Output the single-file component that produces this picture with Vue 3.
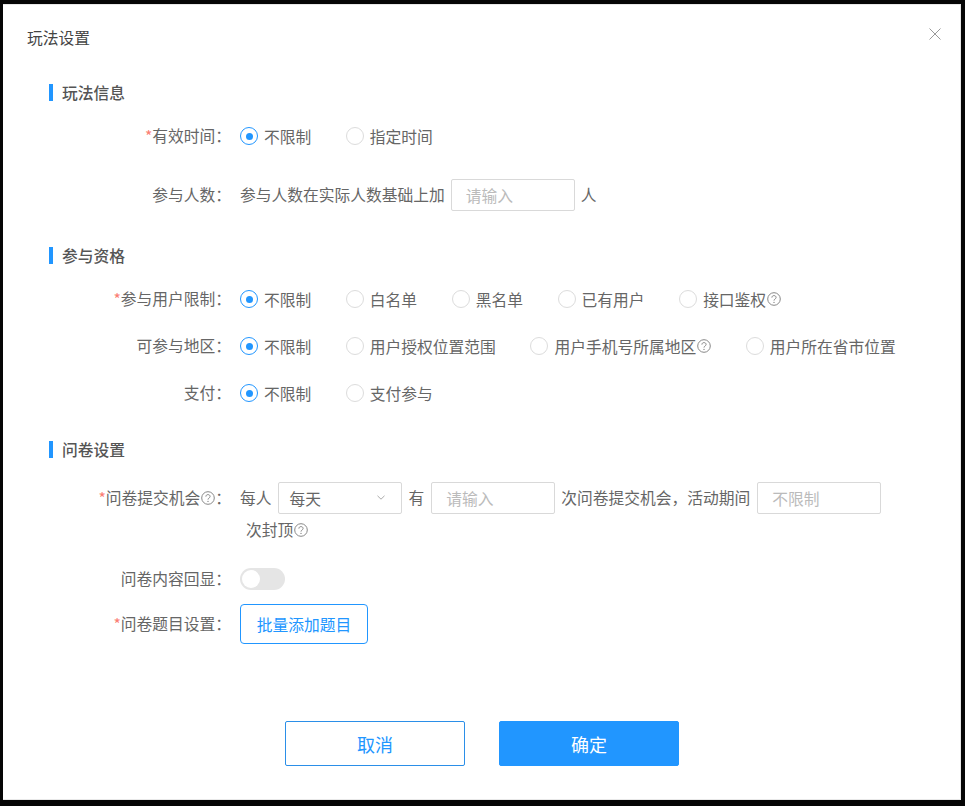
<script setup>
const userLimit = [
  { text: '不限制', on: true },
  { text: '白名单' },
  { text: '黑名单' },
  { text: '已有用户' },
  { text: '接口鉴权', help: true }
]
const region = [
  { text: '不限制', on: true },
  { text: '用户授权位置范围' },
  { text: '用户手机号所属地区', help: true },
  { text: '用户所在省市位置' }
]
const pay = [{ text: '不限制', on: true }, { text: '支付参与' }]
const time = [{ text: '不限制', on: true }, { text: '指定时间' }]
const groups = { time, userLimit, region, pay }
</script>

<template>
  <div class="page">
    <svg width="0" height="0" class="defs">
      <symbol id="help" viewBox="0 0 14 14">
        <circle cx="7" cy="7" r="6.3" fill="none" stroke="currentColor" stroke-width="1" />
        <path d="M4.9 5.6C4.9 4.3 5.8 3.6 7 3.6s2.1.8 2.1 1.8c0 1.6-2.1 1.6-2.1 3.2" fill="none" stroke="currentColor" stroke-width="1" />
        <circle cx="7" cy="10.4" r=".7" fill="currentColor" />
      </symbol>
    </svg>
    <div class="dialog">
      <div class="title">玩法设置</div>
      <svg class="close" width="12" height="12" viewBox="0 0 12 12">
        <path d="M.5.5l11 11M11.5.5l-11 11" stroke="#999" stroke-width="1" fill="none" />
      </svg>

      <section class="sec-first">
        <h3 class="heading">玩法信息</h3>
        <div class="row row-a">
          <label class="lab"><i>*</i>有效时间&#xFF1A;</label>
          <div class="radios">
            <span v-for="r in groups.time" :key="r.text" class="radio-item">
              <span class="radio" :class="{ on: r.on }"></span>{{ r.text }}
            </span>
          </div>
        </div>
        <div class="row">
          <label class="lab">参与人数&#xFF1A;</label>
          <div class="inline">
            <span>参与人数在实际人数基础上加</span>
            <input class="input" placeholder="请输入" />
            <span>人</span>
          </div>
        </div>
      </section>

      <section class="sec-second">
        <h3 class="heading">参与资格</h3>
        <div class="row row-b">
          <label class="lab"><i>*</i>参与用户限制&#xFF1A;</label>
          <div class="radios">
            <span v-for="r in groups.userLimit" :key="r.text" class="radio-item">
              <span class="radio" :class="{ on: r.on }"></span>{{ r.text }}
              <svg v-if="r.help" class="help shifted"><use href="#help" /></svg>
            </span>
          </div>
        </div>
        <div class="row row-b">
          <label class="lab">可参与地区&#xFF1A;</label>
          <div class="radios">
            <span v-for="r in groups.region" :key="r.text" class="radio-item">
              <span class="radio" :class="{ on: r.on }"></span>{{ r.text }}
              <svg v-if="r.help" class="help shifted"><use href="#help" /></svg>
            </span>
          </div>
        </div>
        <div class="row">
          <label class="lab">支付&#xFF1A;</label>
          <div class="radios">
            <span v-for="r in groups.pay" :key="r.text" class="radio-item">
              <span class="radio" :class="{ on: r.on }"></span>{{ r.text }}
            </span>
          </div>
        </div>
      </section>

      <section class="sec-third">
        <h3 class="heading">问卷设置</h3>
        <div class="row row-c">
          <label class="lab"><i>*</i>问卷提交机会<svg class="help"><use href="#help" /></svg>&#xFF1A;</label>
          <div class="inline wrap">
            <span>每人</span>
            <div class="select">每天
              <svg class="chev" width="8" height="5" viewBox="0 0 8 5">
                <path d="M.5.8L4 4.2 7.5.8" fill="none" stroke="#aaa" stroke-width="1" />
              </svg>
            </div>
            <span>有</span>
            <input class="input after-have" placeholder="请输入" />
            <span class="period">次问卷提交机会&#xFF0C;活动期间</span>
            <input class="input" placeholder="不限制" />
            <span class="cap">次封顶<svg class="help shifted"><use href="#help" /></svg></span>
          </div>
        </div>
        <div class="row row-d">
          <label class="lab">问卷内容回显&#xFF1A;</label>
          <div class="switch"><span class="knob"></span></div>
        </div>
        <div class="row row-e">
          <label class="lab"><i>*</i>问卷题目设置&#xFF1A;</label>
          <button class="outline">批量添加题目</button>
        </div>
      </section>

      <div class="footer">
        <button class="btn ghost">取消</button>
        <button class="btn primary">确定</button>
      </div>
    </div>
  </div>
</template>

<style scoped>
.page {
  height: 806px;
  background: #050505;
  padding: 4px 4px 6px 3px;
  box-sizing: border-box;
  font-family: "Noto Sans CJK SC", "Liberation Sans", sans-serif;
  font-size: 15.75px;
  color: #666;
}
.defs { position: absolute; }
.dialog {
  position: relative;
  height: 100%;
  background: #fff;
  border-top: 1px solid #e8e8e8;
  border-bottom: 1px solid #e8e8e8;
  border-right: 1px solid #e8e8e8;
  box-sizing: border-box;
  display: flex;
  flex-direction: column;
  padding-left: 46px;
}
.title {
  margin: 21px 0 0 -22px;
  height: 24px;
  line-height: 24px;
  color: #444;
}
.close { position: absolute; top: 23px; right: 19px; }
.heading {
  margin: 0 0 19px;
  height: 17px;
  line-height: 17px;
  font-size: 15.75px;
  font-weight: 500;
  color: #555;
  border-left: 4px solid #2196ff;
  padding-left: 9px;
}
.sec-first { margin-top: 34px; }
.sec-second { margin-top: 36px; }
.sec-third { margin-top: 32px; }
.sec-third .heading { margin-bottom: 24px; }
.row { display: flex; align-items: flex-start; }
.row-a { margin-bottom: 27px; }
.row-b { margin-bottom: 15px; }
.row-c { margin-bottom: 17px; }
.row-d { margin-bottom: 9px; }
.lab {
  flex: 0 0 182px;
  width: 182px;
  margin-right: 9px;
  text-align: right;
  line-height: 32px;
  white-space: nowrap;
  font-style: normal;
}
.lab i {
  font-style: normal;
  color: #fb7d72;
}
.lab .help { margin: 0 0 0 1px; }
.radios {
  display: flex;
  align-items: center;
  height: 32px;
}
.radio-item {
  display: flex;
  align-items: center;
  margin-right: 34.6px;
  white-space: nowrap;
}
.radio {
  width: 18px;
  height: 18px;
  box-sizing: border-box;
  border: 1px solid #dcdcdc;
  border-radius: 50%;
  margin-right: 6px;
  flex: none;
  display: flex;
  align-items: center;
  justify-content: center;
}
.radio.on { border-color: #2196ff; }
.radio.on::after {
  content: "";
  width: 7px;
  height: 7px;
  border-radius: 50%;
  background: #2196ff;
}
.help {
  width: 14px;
  height: 14px;
  color: #888;
  vertical-align: -1px;
}
.help.shifted { margin-left: 1px; }
.inline {
  display: flex;
  align-items: center;
  height: 32px;
  line-height: 32px;
  white-space: nowrap;
}
.inline.wrap {
  flex-wrap: wrap;
  height: auto;
  width: 660px;
}
.input {
  width: 124px;
  height: 32px;
  box-sizing: border-box;
  border: 1px solid #d9d9d9;
  border-radius: 2px;
  padding: 2px 14px 0;
  margin: 0 6px;
  font: inherit;
  color: #666;
  outline: none;
  background: #fff;
}
.input.after-have { margin-left: 7px; }
.period { margin-right: 1px; }
.input::placeholder { color: #bbb; }
.select {
  position: relative;
  width: 124px;
  height: 32px;
  box-sizing: border-box;
  border: 1px solid #d9d9d9;
  border-radius: 2px;
  padding-left: 11px;
  margin: 0 7px 0 6px;
  line-height: 32px;
}
.chev { position: absolute; right: 16px; top: 12px; }
.cap { margin-left: 6px; display: flex; align-items: center; }
.switch {
  width: 45px;
  height: 22px;
  margin-top: 5px;
  border-radius: 11px;
  background: #e5e5e5;
  display: flex;
  align-items: center;
  padding-left: 2px;
  box-sizing: border-box;
}
.knob {
  width: 18px;
  height: 18px;
  border-radius: 50%;
  background: #fff;
}
.row-e .lab { line-height: 40px; }
.outline {
  width: 128px;
  height: 40px;
  box-sizing: border-box;
  border: 1px solid #2196ff;
  border-radius: 4px;
  background: #fff;
  color: #2196ff;
  font: inherit;
  padding: 0;
}
.footer {
  margin-top: auto;
  padding: 0 0 33px 236px;
  display: flex;
  gap: 34px;
}
.btn {
  width: 180px;
  height: 45px;
  box-sizing: border-box;
  border-radius: 2px;
  font: inherit;
  font-size: 18px;
  padding: 0;
}
.ghost {
  background: #fff;
  border: 1px solid #2b8fe8;
  color: #2196ff;
}
.primary {
  background: #2196ff;
  border: 1px solid #2196ff;
  color: #fff;
}
</style>
